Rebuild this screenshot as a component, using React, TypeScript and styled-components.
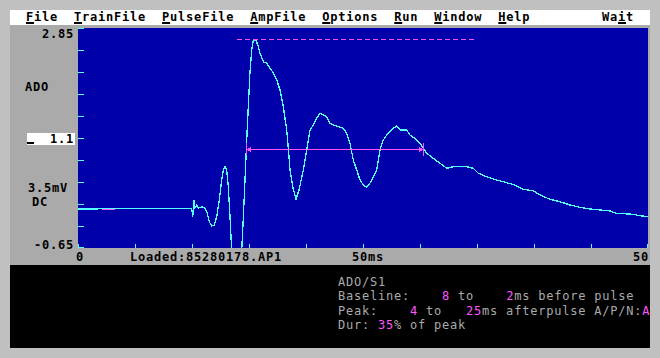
import React from 'react';
import styled, { createGlobalStyle } from 'styled-components';

const MONO = `"DejaVu Sans Mono", "Liberation Mono", monospace`;
const CYAN = '#55ffff';
const MAGENTA = '#ff55ff';

const GlobalStyle = createGlobalStyle`
  html, body {
    margin: 0;
    padding: 0;
    background: #c0c0c0;
  }
  body {
    font-family: ${MONO};
  }
`;

const Screen = styled.div`
  width: 660px;
  height: 358px;
  box-sizing: border-box;
  padding: 10px;
  background: #c0c0c0;
  overflow: hidden;
`;

const Window = styled.div`
  width: 640px;
  display: flex;
  flex-direction: column;
`;

const MenuBar = styled.div`
  height: 15px;
  box-sizing: border-box;
  padding: 1px 16px 0;
  background: #ffffff;
  display: flex;
  gap: 16px;
  font: bold 12px/12px ${MONO};
  letter-spacing: 0.78px;
  color: #000;
  white-space: pre;
`;

const MenuItem = styled.span<{ $right?: boolean }>`
  margin-left: ${(p) => (p.$right ? 'auto' : '0')};
`;

const Hot = styled.span`
  text-decoration: underline;
  text-decoration-thickness: 2px;
  text-underline-offset: 1px;
`;

const ChartArea = styled.div`
  height: 240px;
  background: #aaaaaa;
  display: grid;
  grid-template-columns: 68px 570px 2px;
  grid-template-rows: 3px 220px 17px;
  font: bold 12px/12px ${MONO};
  letter-spacing: 0.78px;
  color: #000;
  white-space: pre;
`;

const YAxis = styled.div`
  grid-column: 1;
  grid-row: 1 / 3;
  display: flex;
  flex-direction: column;
  align-items: flex-end;
  padding-right: 4px;
`;

const AxisLabel = styled.span<{ $gap: number; $left?: number }>`
  height: 12px;
  margin-top: ${(p) => p.$gap}px;
  ${(p) =>
    p.$left !== undefined &&
    `align-self: flex-start; margin-left: ${p.$left}px;`}
`;

const ValueBox = styled.div<{ $gap: number }>`
  align-self: flex-start;
  margin: ${(p) => p.$gap}px 0 0 17px;
  width: 48px;
  height: 12px;
  box-sizing: border-box;
  padding-right: 1px;
  background: #ffffff;
  display: flex;
  justify-content: space-between;
`;

const Cursor = styled.span`
  align-self: flex-end;
  width: 7px;
  height: 2px;
  margin: 0 0 1px 0;
  background: #000;
`;

const Plot = styled.div`
  grid-column: 2;
  grid-row: 2;
  background: #0000aa;
  svg {
    display: block;
  }
`;

const XAxis = styled.div`
  grid-column: 1 / 4;
  grid-row: 3;
  display: flex;
  box-sizing: border-box;
  padding: 3px 1px 0 66px;
`;

const XLabel = styled.span<{ $gap?: number; $end?: boolean }>`
  height: 12px;
  margin-left: ${(p) => (p.$end ? 'auto' : `${p.$gap ?? 0}px`)};
`;

const InfoPanel = styled.div`
  height: 83px;
  box-sizing: border-box;
  padding: 10px 0 0 328px;
  background: #000;
  color: #aaaaaa;
  font: 12px/14.33px ${MONO};
  letter-spacing: 0.78px;
  white-space: pre;
  overflow: hidden;
`;

const InfoLine = styled.div``;

const Num = styled.span`
  color: ${MAGENTA};
`;

const trace: [number, number][] = [
  [78, 209], [150, 208.5], [191.7, 208.3], [192.7, 216.7], [194, 200], [195, 208],
  [196.7, 205], [198.3, 208.3], [201.7, 206.7], [205, 208.3], [207.3, 213.3],
  [209.3, 221.7], [211.7, 226], [214.3, 225], [216.7, 216.7], [219.3, 200],
  [221.7, 180], [223.3, 170], [225, 166.7], [226.7, 170], [228.3, 186.7],
  [230, 216.7], [231.7, 250], [232, 262], [241.5, 262], [241.7, 250],
  [243.3, 218], [245, 180], [246.7, 140], [248.3, 106.7], [250, 71.7],
  [251.7, 50], [253.3, 40], [256, 40], [258.3, 46.7], [260, 53.3],
  [263.3, 61.7], [266.7, 63.3], [270, 68.3], [273.3, 72.7], [276.7, 80],
  [280, 90], [283.3, 106.7], [286.7, 130], [288.3, 148.3], [290, 170],
  [293, 188], [296, 199], [299, 190], [303.3, 170], [306.7, 150], [310, 130],
  [313.3, 125], [316.7, 118.3], [320, 113.3], [323.3, 115], [326.7, 116.7],
  [330, 123.3], [333.3, 125], [340, 127.3], [343.3, 128.3], [346.7, 133.3],
  [350, 143.3], [353.3, 160], [356.7, 170], [360, 180], [364, 186],
  [367, 187], [370, 183], [374, 176], [376.7, 170], [380, 150], [383.3, 140],
  [386.7, 135], [393.3, 128.3], [396.7, 126], [400, 130], [406.7, 130],
  [410, 135], [413.3, 137.3], [420, 143.3], [426.7, 153.3], [433.3, 158.3],
  [440, 163.3], [446.7, 168.3], [453.3, 166.7], [466.7, 166.7], [473.3, 168.3],
  [478.3, 173.3], [486.7, 176.7], [496.7, 180], [506.7, 182.7], [515, 185],
  [523.3, 189.3], [533.3, 190.7], [540, 195], [550, 199.3], [560, 201.7],
  [570, 205], [580, 207.3], [590, 209], [600, 210], [610, 211],
  [616.7, 213.3], [633.3, 214.3], [640, 215.7], [648, 216.7],
];

const yTicks = Array.from({ length: 11 }, (_, k) => Math.min(28 + 22 * k, 247) + 0.5);
const xTicks = Array.from({ length: 11 }, (_, k) => Math.min(78 + 57 * k, 647) + 0.5);

function TraceChart() {
  return (
    <svg width={570} height={220} viewBox="78 28 570 220">
      <g stroke={CYAN} strokeWidth={1} shapeRendering="crispEdges">
        {yTicks.map((y) => (
          <line key={`y${y}`} x1={78} y1={y} x2={84} y2={y} />
        ))}
        {xTicks.map((x) => (
          <line key={`x${x}`} x1={x} y1={244} x2={x} y2={248} />
        ))}
      </g>
      <polyline
        points={trace.map(([x, y]) => `${x},${y}`).join(' ')}
        fill="none"
        stroke={CYAN}
        strokeWidth={1.3}
        shapeRendering="crispEdges"
      />
      <g stroke={MAGENTA} strokeWidth={1.5} shapeRendering="crispEdges" fill={MAGENTA}>
        <line x1={237} y1={39.5} x2={474} y2={39.5} strokeDasharray="5 3" />
        <line x1={102} y1={209.5} x2={115} y2={209.5} />
        <line x1={246.5} y1={149.5} x2={423} y2={149.5} />
        <line x1={246.5} y1={143} x2={246.5} y2={155} />
        <line x1={423.5} y1={143} x2={423.5} y2={156} />
        <polygon points="247,149.5 251,146.5 251,152.5" stroke="none" />
        <polygon points="423,149.5 419,146.5 419,152.5" stroke="none" />
      </g>
    </svg>
  );
}

export default function App() {
  return (
    <>
      <GlobalStyle />
      <Screen>
        <Window>
          <MenuBar>
            <MenuItem><Hot>F</Hot>ile</MenuItem>
            <MenuItem><Hot>T</Hot>rainFile</MenuItem>
            <MenuItem><Hot>P</Hot>ulseFile</MenuItem>
            <MenuItem><Hot>A</Hot>mpFile</MenuItem>
            <MenuItem><Hot>O</Hot>ptions</MenuItem>
            <MenuItem><Hot>R</Hot>un</MenuItem>
            <MenuItem><Hot>W</Hot>indow</MenuItem>
            <MenuItem><Hot>H</Hot>elp</MenuItem>
            <MenuItem $right>Wa<Hot>i</Hot>t</MenuItem>
          </MenuBar>
          <ChartArea>
            <YAxis>
              <AxisLabel $gap={3}>2.85</AxisLabel>
              <AxisLabel $gap={41} $left={15}>ADO</AxisLabel>
              <ValueBox $gap={40}>
                <Cursor />
                <span>1.1</span>
              </ValueBox>
              <AxisLabel $gap={37} $left={18}>3.5mV</AxisLabel>
              <AxisLabel $gap={2} $left={22}>DC</AxisLabel>
              <AxisLabel $gap={31}>-0.65</AxisLabel>
            </YAxis>
            <Plot>
              <TraceChart />
            </Plot>
            <XAxis>
              <XLabel>0</XLabel>
              <XLabel $gap={46}>Loaded:85280178.AP1</XLabel>
              <XLabel $gap={70}>50ms</XLabel>
              <XLabel $end>50</XLabel>
            </XAxis>
          </ChartArea>
          <InfoPanel>
            <InfoLine>ADO/S1</InfoLine>
            <InfoLine>
              {'Baseline:    '}<Num>8</Num>{' to    '}<Num>2</Num>{'ms before pulse'}
            </InfoLine>
            <InfoLine>
              {'Peak:    '}<Num>4</Num>{' to   '}<Num>25</Num>{'ms afterpulse A/P/N:'}<Num>A</Num>
            </InfoLine>
            <InfoLine>
              {'Dur: '}<Num>35</Num>{'% of peak'}
            </InfoLine>
          </InfoPanel>
        </Window>
      </Screen>
    </>
  );
}
